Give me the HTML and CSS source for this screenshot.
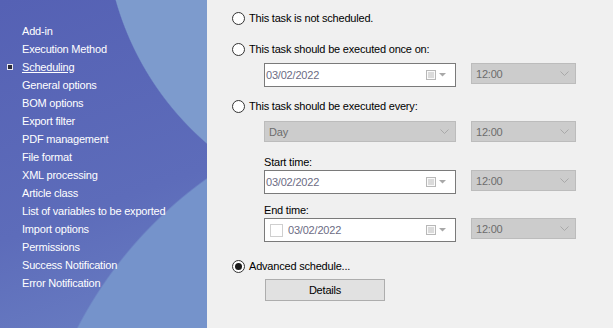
FILE: index.html
```html
<!DOCTYPE html>
<html lang="en">
<head>
  <meta charset="UTF-8" />
  <title>Scheduling</title>
  <link rel="stylesheet" href="styles.css">
</head>
<body>
  <div class="window">
    <nav class="sidebar">
      <ul class="nav-list">
        <li>Add-in</li>
        <li>Execution Method</li>
        <li class="active"><span class="bullet"></span>Scheduling</li>
        <li>General options</li>
        <li>BOM options</li>
        <li>Export filter</li>
        <li>PDF management</li>
        <li>File format</li>
        <li>XML processing</li>
        <li>Article class</li>
        <li>List of variables to be exported</li>
        <li>Import options</li>
        <li>Permissions</li>
        <li>Success Notification</li>
        <li>Error Notification</li>
      </ul>
    </nav>

    <main class="panel">
      <label class="radio-row row-not"><span class="radio"></span>This task is not scheduled.</label>

      <label class="radio-row row-once"><span class="radio"></span>This task should be executed once on:</label>
      <div class="field-row row-once-fields">
        <div class="date-box">
          <span class="date-text">03/02/2022</span>
          <span class="cal">
            <svg width="10" height="10" viewBox="0 0 10 10"><rect x="0.5" y="0.5" width="9" height="9" fill="#fafafa" stroke="#b8b8b8"/><path d="M2 3h6M2 5h6M2 7h6M3 2v6M5 2v6M7 2v6" stroke="#d0d0d0" stroke-width="1"/></svg>
            <svg width="7" height="4" viewBox="0 0 7 4"><path d="M0 0h7L3.5 3.5z" fill="#a8a8a8"/></svg>
          </span>
        </div>
        <div class="select-box time"><span>12:00</span><svg width="9" height="5" viewBox="0 0 9 5"><path d="M0.5 0.5l4 4 4-4" fill="none" stroke="#a9a9a9"/></svg></div>
      </div>

      <label class="radio-row row-every"><span class="radio"></span>This task should be executed every:</label>
      <div class="field-row row-every-fields">
        <div class="select-box wide"><span>Day</span><svg width="9" height="5" viewBox="0 0 9 5"><path d="M0.5 0.5l4 4 4-4" fill="none" stroke="#a9a9a9"/></svg></div>
        <div class="select-box time"><span>12:00</span><svg width="9" height="5" viewBox="0 0 9 5"><path d="M0.5 0.5l4 4 4-4" fill="none" stroke="#a9a9a9"/></svg></div>
      </div>

      <div class="field-label row-start-label">Start time:</div>
      <div class="field-row">
        <div class="date-box">
          <span class="date-text">03/02/2022</span>
          <span class="cal">
            <svg width="10" height="10" viewBox="0 0 10 10"><rect x="0.5" y="0.5" width="9" height="9" fill="#fafafa" stroke="#b8b8b8"/><path d="M2 3h6M2 5h6M2 7h6M3 2v6M5 2v6M7 2v6" stroke="#d0d0d0" stroke-width="1"/></svg>
            <svg width="7" height="4" viewBox="0 0 7 4"><path d="M0 0h7L3.5 3.5z" fill="#a8a8a8"/></svg>
          </span>
        </div>
        <div class="select-box time"><span>12:00</span><svg width="9" height="5" viewBox="0 0 9 5"><path d="M0.5 0.5l4 4 4-4" fill="none" stroke="#a9a9a9"/></svg></div>
      </div>

      <div class="field-label row-end-label">End time:</div>
      <div class="field-row">
        <div class="date-box">
          <span class="check"></span>
          <span class="date-text">03/02/2022</span>
          <span class="cal">
            <svg width="10" height="10" viewBox="0 0 10 10"><rect x="0.5" y="0.5" width="9" height="9" fill="#fafafa" stroke="#b8b8b8"/><path d="M2 3h6M2 5h6M2 7h6M3 2v6M5 2v6M7 2v6" stroke="#d0d0d0" stroke-width="1"/></svg>
            <svg width="7" height="4" viewBox="0 0 7 4"><path d="M0 0h7L3.5 3.5z" fill="#a8a8a8"/></svg>
          </span>
        </div>
        <div class="select-box time"><span>12:00</span><svg width="9" height="5" viewBox="0 0 9 5"><path d="M0.5 0.5l4 4 4-4" fill="none" stroke="#a9a9a9"/></svg></div>
      </div>

      <label class="radio-row row-adv"><span class="radio checked"></span>Advanced schedule...</label>
      <button type="button" class="details-btn">Details</button>
    </main>
  </div>
</body>
</html>
```

FILE: styles.css
```css
body {
  margin: 0;
  font-family: 'Liberation Sans', Arial, sans-serif;
  font-size: 11px;
  letter-spacing: -0.2px;
  background: #f0f0f0;
}

.window {
  display: flex;
  width: 613px;
  height: 328px;
  overflow: hidden;
}

/* left navigation */
.sidebar {
  width: 207px;
  flex: none;
  background:
    radial-gradient(circle 296px at 400px -80px, #7d9bcd 99.6%, rgba(125,155,205,0) 100%),
    radial-gradient(circle 420px at 450px 520px, #7593cb 99.6%, rgba(117,147,203,0) 100%),
    linear-gradient(160deg, #5561b4 0%, #5d6cba 60%, #6a7fc3 100%);
}

.nav-list {
  list-style: none;
  margin: 0;
  padding: 22px 0 0 22px;
  color: #ffffff;
}
.nav-list li {
  height: 18px;
  line-height: 18px;
  white-space: nowrap;
}
.nav-list li.active {
  text-decoration: underline;
}
.bullet {
  display: inline-block;
  width: 4px;
  height: 4px;
  background: #2b2b3a;
  border: 1px solid #e8e8f0;
  margin-left: -15px;
  margin-right: 9px;
  vertical-align: 1px;
}

/* right panel */
.panel {
  flex: 1;
  display: flex;
  flex-direction: column;
  padding-left: 25px;
  color: #000;
}

.radio-row {
  display: flex;
  align-items: center;
  height: 16px;
  gap: 4px;
}
.radio {
  width: 11px;
  height: 11px;
  border: 1px solid #333;
  border-radius: 50%;
  background: #fff;
  display: flex;
  align-items: center;
  justify-content: center;
}
.radio.checked::after {
  content: '';
  width: 7px;
  height: 7px;
  border-radius: 50%;
  background: #1a1a1a;
}

.row-not { margin-top: 10px; }
.row-once { margin-top: 15px; }
.row-once-fields { margin-top: 6px; }
.row-every { margin-top: 11px; }
.row-every-fields { margin-top: 7px; }
.row-start-label { margin-top: 12px; }
.row-end-label { margin-top: 8px; }
.row-adv { margin-top: 16px; }

.field-row {
  display: flex;
  align-items: flex-start;
  gap: 15px;
  margin-left: 32px;
}

.field-label {
  margin-left: 32px;
  height: 16px;
  line-height: 16px;
}

.date-box {
  box-sizing: border-box;
  width: 192px;
  height: 24px;
  border: 1px solid #7a7a7a;
  background: #fff;
  display: flex;
  align-items: center;
  padding-left: 1px;
  color: #6c6c84;
}
.date-text {
  flex: 1;
}
.cal {
  display: flex;
  align-items: center;
  gap: 3px;
  margin-right: 9px;
}
.check {
  box-sizing: border-box;
  width: 13px;
  height: 13px;
  border: 1px solid #cfcfcf;
  background: #fff;
  margin: 0 5px 0 4px;
}

.select-box {
  box-sizing: border-box;
  height: 21px;
  border: 1px solid #bcbcbc;
  background: #cccccc;
  color: #6d6d6d;
  display: flex;
  align-items: center;
  justify-content: space-between;
  padding: 0 6px 0 4px;
}
.select-box.wide { width: 192px; }
.select-box.time { width: 105px; }

.details-btn {
  margin: 5px 0 0 33px;
  width: 120px;
  height: 22px;
  border: 1px solid #adadad;
  background: #e1e1e1;
  font-family: inherit;
  font-size: 11px;
  letter-spacing: -0.2px;
  color: #000;
  padding: 0;
}
```
